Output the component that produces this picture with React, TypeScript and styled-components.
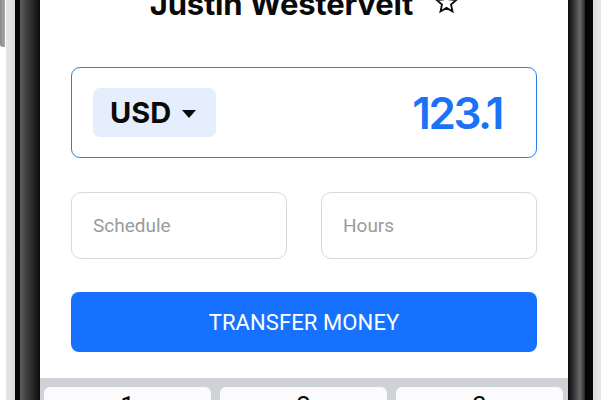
import React from 'react';
import styled, { createGlobalStyle } from 'styled-components';

const GlobalStyle = createGlobalStyle`
  html,
  body {
    margin: 0;
    padding: 0;
    background: #ffffff;
    overflow: hidden;
  }

  * {
    box-sizing: border-box;
  }
`;

const Page = styled.div`
  position: relative;
  height: 400px;
  width: 608px;
  padding: 0 7px 0 6px;
  background: #ffffff;
  display: flex;
`;

const SideButton = styled.div`
  position: absolute;
  left: 0;
  top: 0;
  width: 5px;
  height: 47px;
  border-bottom-left-radius: 3px;
  background: linear-gradient(to right, #8a8a8a, #a8a8a8);
`;

const Frame = styled.div`
  flex: 1;
  display: flex;
  padding: 0 8px 0 9px;
  background: linear-gradient(
    to right,
    #e6e6e6 0,
    #d9d9d9 9px,
    #d9d9d9 calc(100% - 8px),
    #e8e8e8 100%
  );
`;

const Rim = styled.div`
  flex: 1;
  display: flex;
  padding: 0 8px 0 5px;
  background: #050505;
`;

const Bezel = styled.div`
  flex: 1;
  display: flex;
  padding: 0 17px 0 20px;
  background: linear-gradient(
    to right,
    #5c5c5c 0,
    #2a2a2a 12px,
    #0c0c0c 20px,
    #0c0c0c calc(100% - 17px),
    #2e2e2e calc(100% - 12px),
    #6a6a6a calc(100% - 5px),
    #262626 100%
  );
`;

const Screen = styled.div`
  flex: 1;
  display: flex;
  flex-direction: column;
  background: #ffffff;
  overflow: hidden;
`;

const Content = styled.div`
  display: flex;
  flex-direction: column;
  padding: 0 31px;
`;

const TitleRow = styled.div`
  margin-top: -14px;
  height: 36px;
  display: flex;
  align-items: center;
  justify-content: center;
  gap: 22px;
`;

const Name = styled.h1`
  margin: 0;
  font-family: Inter, 'Noto Sans', sans-serif;
  font-size: 31px;
  line-height: 36px;
  font-weight: 700;
  color: #0a0a0a;
  letter-spacing: -0.2px;
`;

const StarIcon = styled.svg`
  width: 23px;
  height: 23px;
  margin-top: -4px;
`;

const AmountBox = styled.div`
  margin-top: 45px;
  height: 91px;
  border: 1.5px solid #2b7cf2;
  border-radius: 9px;
  display: flex;
  align-items: center;
  justify-content: space-between;
  padding: 0 34px 0 21px;
`;

const CurrencyPill = styled.button`
  height: 49px;
  width: 123px;
  border: none;
  border-radius: 7px;
  background: #e4eefd;
  display: flex;
  align-items: center;
  gap: 11px;
  padding: 0 0 0 17px;
  font-family: Inter, 'Noto Sans', sans-serif;
  font-size: 29px;
  font-weight: 700;
  color: #0a0a0a;
  cursor: pointer;
`;

const Caret = styled.span`
  width: 0;
  height: 0;
  border-left: 7px solid transparent;
  border-right: 7px solid transparent;
  border-top: 8px solid #0a0a0a;
  margin-top: 2px;
`;

const Amount = styled.div`
  font-family: Inter, 'Noto Sans', sans-serif;
  font-size: 44px;
  font-weight: 600;
  letter-spacing: -2.4px;
  color: #1a72f5;
`;

const FieldRow = styled.div`
  margin-top: 34px;
  display: grid;
  grid-template-columns: 1fr 1fr;
  gap: 34px;
`;

const Field = styled.input`
  height: 67px;
  width: 100%;
  border: 1px solid #d9d9d9;
  border-radius: 10px;
  padding: 0 0 0 21px;
  font-family: Roboto, 'Liberation Sans', sans-serif;
  font-size: 19px;
  color: #333333;
  background: #ffffff;
  outline: none;

  &::placeholder {
    color: #9b9b9b;
  }
`;

const TransferButton = styled.button`
  margin-top: 33px;
  height: 60px;
  border: none;
  border-radius: 8px;
  background: #1672fe;
  color: #ffffff;
  font-family: Roboto, 'Liberation Sans', sans-serif;
  font-size: 22px;
  font-weight: 400;
  letter-spacing: 0.1px;
  cursor: pointer;
`;

const Keyboard = styled.div`
  margin-top: 26px;
  flex: 1;
  background: #cfd2d6;
  padding: 9px 5px 0 4px;
  display: grid;
  grid-template-columns: repeat(3, 1fr);
  gap: 9px;
`;

const Key = styled.div`
  height: 52px;
  border-radius: 6px;
  background: #fbfbfd;
  box-shadow: 0 1px 0 #a9acb1;
  padding-top: 4px;
  text-align: center;
  font-family: Roboto, 'Liberation Sans', sans-serif;
  font-size: 26px;
  line-height: 1.2;
  color: #0a0a0a;
`;

const Star = () => (
  <StarIcon viewBox="0 0 24 24" fill="none">
    <path
      d="M12 2.2l2.95 6.55 7.15.72-5.37 4.8 1.530 7.03L12 17.65l-6.26 3.65 1.53-7.03-5.37-4.8 7.15-.72z"
      stroke="#0a0a0a"
      strokeWidth="1.9"
      strokeLinejoin="miter"
    />
  </StarIcon>
);

const keys = ['1', '2', '3'];

export default function App() {
  return (
    <>
      <GlobalStyle />
      <Page>
        <SideButton />
        <Frame>
          <Rim>
            <Bezel>
              <Screen>
                <Content>
                  <TitleRow>
                    <Name>Justin Westervelt</Name>
                    <Star />
                  </TitleRow>
                  <AmountBox>
                    <CurrencyPill>
                      USD
                      <Caret />
                    </CurrencyPill>
                    <Amount>123.1</Amount>
                  </AmountBox>
                  <FieldRow>
                    <Field placeholder="Schedule" />
                    <Field placeholder="Hours" />
                  </FieldRow>
                  <TransferButton>TRANSFER MONEY</TransferButton>
                </Content>
                <Keyboard>
                  {keys.map((k) => (
                    <Key key={k}>{k}</Key>
                  ))}
                </Keyboard>
              </Screen>
            </Bezel>
          </Rim>
        </Frame>
      </Page>
    </>
  );
}
